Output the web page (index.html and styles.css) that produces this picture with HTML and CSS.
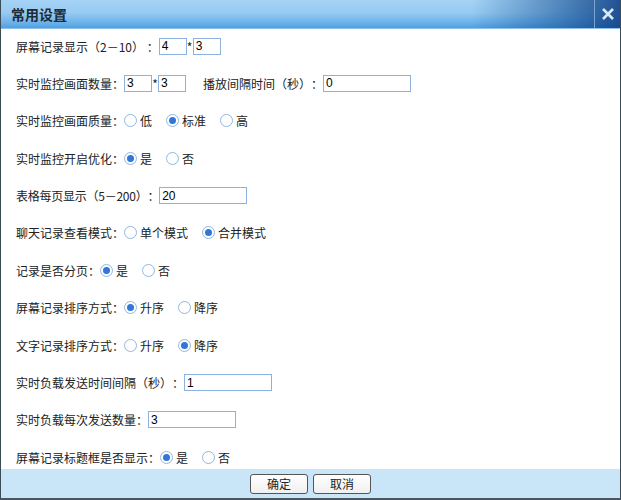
FILE: index.html
```html
<!DOCTYPE html>
<html lang="zh-CN">
<head>
  <meta charset="utf-8">
  <title>常用设置</title>
  <link rel="stylesheet" href="styles.css">
</head>
<body>
  <div class="dialog">
    <div class="titlebar">
      <span class="title">常用设置</span>
      <span class="close">
        <svg width="14" height="12" viewBox="0 0 14 12"><path d="M2 1 L12 11 M12 1 L2 11" stroke="#dde8f2" stroke-width="2.6"/></svg>
      </span>
    </div>
    <div class="content">
      <div class="row">屏幕记录显示（2－10） ：<input class="txt small" value="4"><span class="star">*</span><input class="txt small" value="3"></div>
      <div class="row">实时监控画面数量：<input class="txt small" value="3"><span class="star">*</span><input class="txt small" value="3"><span class="sub">播放间隔时间（秒）：</span><input class="txt wide" value="0"></div>
      <div class="row">实时监控画面质量：<span class="opt"><i class="radio"></i>低</span><span class="opt"><i class="radio on"></i>标准</span><span class="opt"><i class="radio"></i>高</span></div>
      <div class="row">实时监控开启优化：<span class="opt"><i class="radio on"></i>是</span><span class="opt"><i class="radio"></i>否</span></div>
      <div class="row"><span class="tight">表格每页显示（5－200）：</span><input class="txt wide" value="20"></div>
      <div class="row">聊天记录查看模式：<span class="opt"><i class="radio"></i>单个模式</span><span class="opt"><i class="radio on"></i>合并模式</span></div>
      <div class="row">记录是否分页：<span class="opt"><i class="radio on"></i>是</span><span class="opt"><i class="radio"></i>否</span></div>
      <div class="row">屏幕记录排序方式：<span class="opt"><i class="radio on"></i>升序</span><span class="opt"><i class="radio"></i>降序</span></div>
      <div class="row">文字记录排序方式：<span class="opt"><i class="radio"></i>升序</span><span class="opt"><i class="radio on"></i>降序</span></div>
      <div class="row">实时负载发送时间间隔（秒）：<input class="txt wide" value="1"></div>
      <div class="row">实时负载每次发送数量：<input class="txt wide" value="3"></div>
      <div class="row">屏幕记录标题框是否显示：<span class="opt"><i class="radio on"></i>是</span><span class="opt"><i class="radio"></i>否</span></div>
    </div>
    <div class="footer">
      <button class="btn">确定</button>
      <button class="btn">取消</button>
    </div>
  </div>
</body>
</html>
```

FILE: styles.css
```css
body {
  margin: 0;
  background: #fff;
  font-family: "Noto Sans CJK SC", "Liberation Sans", sans-serif;
  font-size: 12px;
  color: #222;
  text-spacing-trim: space-all;
  font-kerning: none;
}

.dialog {
  width: 619px;
  height: 498px;
  border-left: 1px solid #3c4c56;
  border-right: 2px solid #3c4c56;
  border-bottom: 2px solid #4a5560;
  display: flex;
  flex-direction: column;
  background: #fff;
}

.titlebar {
  height: 28px;
  border-bottom: 1px solid #8fc1ea;
  display: flex;
  align-items: center;
  background:
    linear-gradient(to right, rgba(20,70,140,0) 0%, rgba(20,70,140,0) 76%, rgba(20,80,150,0.6) 91%, rgba(10,60,130,0.85) 100%),
    linear-gradient(to bottom, #a6d3f5 0%, #97cbf2 45%, #6db3ea 80%, #4f9fe2 100%);
}

.title {
  flex: 1;
  padding-left: 10px;
  font-size: 14px;
  font-weight: bold;
  color: #1e2a36;
}

.close {
  width: 25px;
  height: 28px;
  border-left: 1px solid #7aa4cc;
  display: flex;
  align-items: center;
  justify-content: center;
}

.content {
  flex: 1;
  padding: 8px 0 0 15px;
  display: flex;
  flex-direction: column;
  gap: 19.4px;
}

.row {
  height: 18px;
  display: flex;
  align-items: center;
  white-space: nowrap;
}

.tight {
  letter-spacing: -0.25px;
}

.txt {
  height: 17px;
  box-sizing: border-box;
  border: 1px solid #8db2e2;
  padding: 0 2px;
  margin: 0;
  font-family: "Liberation Sans", sans-serif;
  font-size: 12px;
  color: #000;
  outline: none;
}

.small {
  width: 28px;
}

.wide {
  width: 88px;
}

.star {
  width: 6px;
  text-align: center;
}

.sub {
  margin-left: 17px;
}

.opt {
  display: flex;
  align-items: center;
  margin-right: 14px;
}

.radio {
  width: 13px;
  height: 13px;
  box-sizing: border-box;
  border: 1px solid #8fb8e0;
  border-radius: 50%;
  background: #fff;
  margin-right: 3px;
  position: relative;
}

.radio.on::after {
  content: "";
  position: absolute;
  left: 2px;
  top: 2px;
  width: 7px;
  height: 7px;
  border-radius: 50%;
  background: #2f78d8;
}

.footer {
  height: 29px;
  background: #c9e6f8;
  display: flex;
  justify-content: center;
  align-items: center;
  gap: 5px;
}

.btn {
  width: 58px;
  height: 20px;
  margin: 0;
  border: 1px solid #555;
  border-radius: 3px;
  background: linear-gradient(to bottom, #ffffff, #f0f0f0);
  font-family: "Noto Sans CJK SC", sans-serif;
  font-size: 12px;
  color: #222;
  padding: 0;
}
```
